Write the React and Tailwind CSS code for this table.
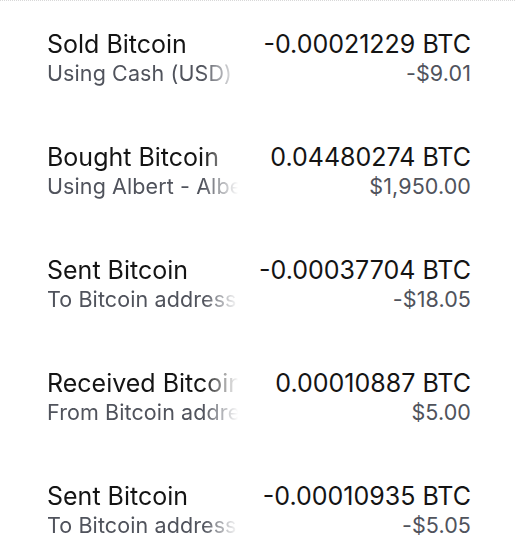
export default function App() {
  const rows = [
    ["Sold Bitcoin", "Using Cash (USD)", "-0.00021229 BTC", "-$9.01"],
    ["Bought Bitcoin", "Using Albert - Albert Cash", "0.04480274 BTC", "$1,950.00"],
    ["Sent Bitcoin", "To Bitcoin address", "-0.00037704 BTC", "-$18.05"],
    ["Received Bitcoin", "From Bitcoin address", "0.00010887 BTC", "$5.00"],
    ["Sent Bitcoin", "To Bitcoin address", "-0.00010935 BTC", "-$5.05"],
  ];
  return (
    <div className="w-[515px] h-[548px] overflow-hidden bg-white border-t border-dotted border-[#d8d8d8] font-['Inter',sans-serif]">
      <div className="flex flex-col gap-[55px] pt-[29px] pl-[47px] pr-[44px]">
        {rows.map((r, i) => (
          <div key={i} className="flex items-start">
            <div className="w-[195px] shrink-0 overflow-hidden whitespace-nowrap [mask-image:linear-gradient(to_right,black_80%,transparent_98%)]">
              <div className="text-[25px] leading-[28px] text-[#141414]">{r[0]}</div>
              <div className="text-[21.5px] leading-[30px] tracking-[0.1px] text-[#50535c]">{r[1]}</div>
            </div>
            <div className="flex-1 text-right whitespace-nowrap">
              <div className="text-[25px] leading-[28px] text-[#141414]">{r[2]}</div>
              <div className="text-[21.5px] leading-[30px] tracking-[0.1px] text-[#50535c]">{r[3]}</div>
            </div>
          </div>
        ))}
      </div>
    </div>
  );
}
